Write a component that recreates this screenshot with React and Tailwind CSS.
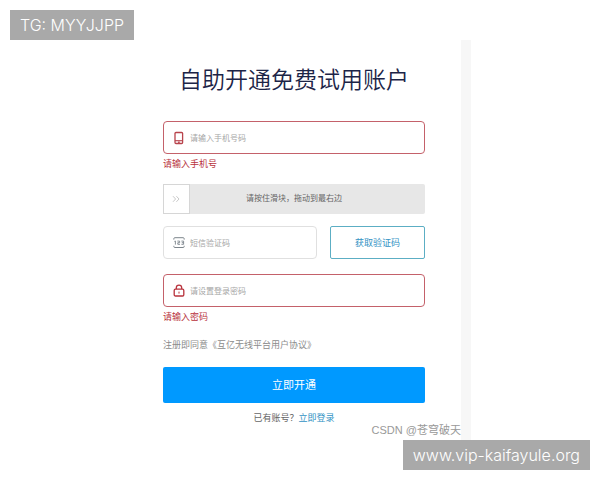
import React from "react";

function PhoneIcon() {
  return (
    <svg viewBox="0 0 12 14" className="h-[14px] w-3 shrink-0" fill="none" stroke="#b8434c" aria-hidden="true">
      <rect x="2" y="1.5" width="7.6" height="11" rx="1" strokeWidth="1.3" />
      <path d="M2 9.7h7.6" strokeWidth="1.1" />
      <path d="M5.1 11.3h1.6" strokeWidth="1.4" />
    </svg>
  );
}

function CodeIcon() {
  return (
    <svg viewBox="0 0 12 12" className="h-3 w-3 shrink-0" fill="none" stroke="#7d858c" aria-hidden="true">
      <path d="M.8 2.6V1.8Q.8.7 1.8.7h8.4q1 0 1 1.1v.8M.8 8.8v.6q0 1.1 1 1.1h8.4q1 0 1-1.1v-.6" strokeWidth="1" />
      <path d="M1.4 4.4l1-.4v3.6M4.4 4.1h2.2v1.6H4.8v1.6h2.2M8.4 4.1h2.2v3.2H8.4M8.8 5.7h1.8" strokeWidth="0.9" />
    </svg>
  );
}

function LockIcon() {
  return (
    <svg viewBox="0 0 12 14" className="h-[14px] w-3 shrink-0" fill="none" stroke="#b8323c" aria-hidden="true">
      <rect x="1.2" y="5.2" width="9.6" height="6.8" rx="1.2" strokeWidth="1.3" />
      <path d="M3.3 5V3.8a2.7 2.7 0 0 1 5.4 0V5" strokeWidth="1.3" />
      <path d="M6 7.6v2" strokeWidth="1" />
    </svg>
  );
}

function Field({ id, label, type, icon, invalid }) {
  const border = invalid ? "border-[#c4616a]" : "border-[#e0e0e0]";
  return (
    <div className={`flex h-[33px] min-w-0 flex-1 items-center gap-[5px] rounded-[4px] border bg-white px-[9px] ${border}`}>
      <label htmlFor={id}>{icon}</label>
      <input
        id={id}
        type={type}
        placeholder={label}
        aria-label={label}
        aria-invalid={invalid}
        className="h-full min-w-0 flex-1 bg-transparent pt-0.5 text-[8px] leading-6 outline-none placeholder:text-[#a6a6a6]"
      />
    </div>
  );
}

export default function App() {
  return (
    <div className="relative min-h-screen bg-white py-10 font-['Liberation_Sans','Noto_Sans_CJK_SC',sans-serif]">
      <main className="relative mx-auto w-full max-w-[342px] border-r-10 border-[#f7f7f7] pt-6 pr-9 pb-4 pl-[34px]">
        <h1 className="text-center text-[23px] leading-8 font-[350] whitespace-nowrap text-[#1c2447]">自助开通免费试用账户</h1>
        <form className="mt-[25px] text-[9px] leading-3" onSubmit={(e) => e.preventDefault()}>
          <div className="flex">
            <Field id="phone" label="请输入手机号码" type="tel" icon={<PhoneIcon />} invalid />
          </div>
          <p className="mt-1 text-[#b8323c]">请输入手机号</p>

          <div className="relative mt-[14px] flex h-[30px]">
            <input
              id="verify"
              type="range"
              min="0"
              max="100"
              defaultValue="0"
              className="h-[30px] w-full appearance-none rounded-xs bg-[#e7e7e7] [&::-webkit-slider-thumb]:h-[30px] [&::-webkit-slider-thumb]:w-[27px] [&::-webkit-slider-thumb]:appearance-none [&::-webkit-slider-thumb]:border [&::-webkit-slider-thumb]:border-[#d6d6d6] [&::-webkit-slider-thumb]:bg-white"
            />
            <label htmlFor="verify" className="pointer-events-none absolute inset-0 flex items-center justify-center text-[8px] text-[#666]">
              请按住滑块，拖动到最右边
            </label>
            <svg viewBox="0 0 8 8" className="pointer-events-none absolute top-[11px] left-[9px] h-2 w-2" fill="none" stroke="#bbbbbb" strokeWidth="0.8" aria-hidden="true">
              <path d="M1 1.2L3.6 4 1 6.8M4.4 1.2L7 4 4.4 6.8" />
            </svg>
          </div>

          <div className="mt-3 flex gap-[13px]">
            <Field id="code" label="短信验证码" type="text" icon={<CodeIcon />} />
            <button type="button" className="h-[33px] w-[95px] rounded-xs border border-[#5caec4] text-[#3292c4]">获取验证码</button>
          </div>

          <div className="mt-[15px] flex">
            <Field id="password" label="请设置登录密码" type="password" icon={<LockIcon />} invalid />
          </div>
          <p className="mt-1 text-[#b8323c]">请输入密码</p>

          <p className="mt-4 whitespace-nowrap text-[#8c8c8c]">注册即同意《互亿无线平台用户协议》</p>
          <button type="submit" className="mt-4 h-9 w-full rounded-xs bg-[#0099ff] text-[11px] text-white">立即开通</button>
          <p className="mt-[9px] text-center text-[#666]">
            已有账号？<a href="#login" className="text-[#3292c4]">立即登录</a>
          </p>
        </form>
        <div className="absolute right-0 bottom-0.5 text-[11px] leading-4 whitespace-nowrap text-[#999]">CSDN @苍穹破天</div>
      </main>

      <div className="absolute top-[10px] left-[10px] flex h-[30px] items-center bg-[#a9a9a9] px-[10px] font-['Inter','Liberation_Sans',sans-serif] text-[16px] font-light whitespace-nowrap text-white">
        TG: MYYJJPP
      </div>
      <div className="absolute right-[10px] bottom-[10px] flex h-[30px] items-center bg-[#a9a9a9] px-[10px] font-['Inter','Liberation_Sans',sans-serif] text-[16px] font-light whitespace-nowrap text-white">
        www.vip-kaifayule.org
      </div>
    </div>
  );
}
